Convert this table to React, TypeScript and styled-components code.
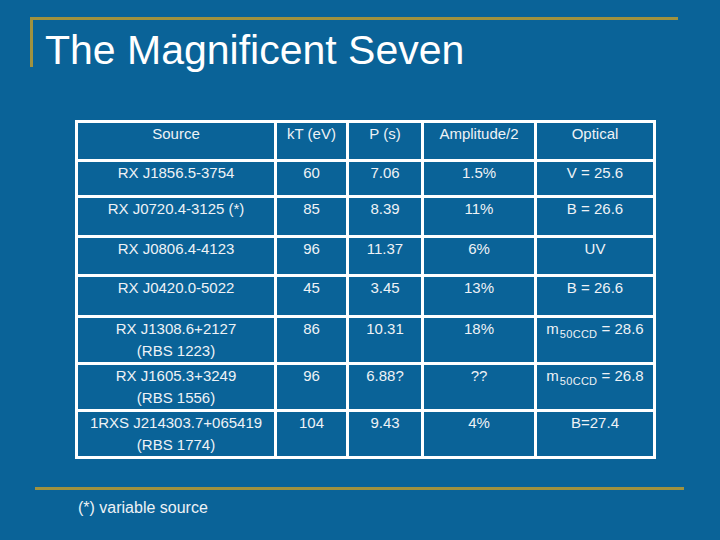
import styled, { createGlobalStyle } from 'styled-components'

const GlobalStyle = createGlobalStyle`
  html, body {
    margin: 0;
    padding: 0;
    background: #0a6398;
  }
`

const rows = [
  { source: ['RX J1856.5-3754'], kt: '60', p: '7.06', amp: '1.5%', opt: 'V = 25.6', h: 36 },
  { source: ['RX J0720.4-3125 (*)'], kt: '85', p: '8.39', amp: '11%', opt: 'B = 26.6', h: 40 },
  { source: ['RX J0806.4-4123'], kt: '96', p: '11.37', amp: '6%', opt: 'UV', h: 39 },
  { source: ['RX J0420.0-5022'], kt: '45', p: '3.45', amp: '13%', opt: 'B = 26.6', h: 41 },
  { source: ['RX J1308.6+2127', '(RBS 1223)'], kt: '86', p: '10.31', amp: '18%', opt: 'm|28.6', h: 47 },
  { source: ['RX J1605.3+3249', '(RBS 1556)'], kt: '96', p: '6.88?', amp: '??', opt: 'm|26.8', h: 46 },
  { source: ['1RXS J214303.7+065419', '(RBS 1774)'], kt: '104', p: '9.43', amp: '4%', opt: 'B=27.4', h: 46 },
]

const colWidths = [199, 72, 75, 113, 119]

// "m|x" marks a m_50CCD magnitude
const Optical = ({ value }: { value: string }) => {
  if (!value.startsWith('m|')) return <>{value}</>
  return (
    <>
      m<Sub>50CCD</Sub> = {value.slice(2)}
    </>
  )
}

const App = () => {
  return (
    <Page>
      <GlobalStyle />
      <Header>
        <Title>The Magnificent Seven</Title>
      </Header>
      <Table>
        <colgroup>
          {colWidths.map((w, i) => (
            <col key={i} style={{ width: w }} />
          ))}
        </colgroup>
        <tbody>
          <Row $h={39}>
            <Cell>Source</Cell>
            <Cell>kT (eV)</Cell>
            <Cell>P (s)</Cell>
            <Cell>Amplitude/2</Cell>
            <Cell>Optical</Cell>
          </Row>
          {rows.map((r) => (
            <Row key={r.source[0]} $h={r.h}>
              <Cell>
                {r.source.map((s, i) => (
                  <div key={i}>{s}</div>
                ))}
              </Cell>
              <Cell>{r.kt}</Cell>
              <Cell>{r.p}</Cell>
              <Cell>{r.amp}</Cell>
              <Cell>
                <Optical value={r.opt} />
              </Cell>
            </Row>
          ))}
        </tbody>
      </Table>
      <Footnote>(*) variable source</Footnote>
    </Page>
  )
}

export default App

const Page = styled.div`
  width: 720px;
  height: 540px;
  background: #0a6398;
  overflow: hidden;
  display: flex;
  flex-direction: column;
  align-items: flex-start;
  font-family: 'Liberation Sans', Arial, sans-serif;
  color: #eef2f6;
`

const Header = styled.div`
  box-sizing: border-box;
  margin: 17px 0 0 30px;
  width: 648px;
  height: 50px;
  border-top: 3px solid #a0923f;
  border-left: 3px solid #a0923f;
`

const Title = styled.h1`
  margin: 0;
  padding: 7px 0 0 12px;
  font-size: 41px;
  line-height: 47px;
  font-weight: 400;
  color: #ffffff;
  white-space: nowrap;
`

const Table = styled.table`
  margin: 53px 0 0 75px;
  border-collapse: separate;
  border-spacing: 0;
  table-layout: fixed;
  width: 581px;
  border-top: 3px solid #ffffff;
  border-left: 3px solid #ffffff;
`

const Row = styled.tr<{ $h: number }>`
  height: ${(p) => p.$h}px;
`

const Cell = styled.td`
  box-sizing: border-box;
  padding: 0;
  border-right: 3px solid #ffffff;
  border-bottom: 3px solid #ffffff;
  vertical-align: top;
  text-align: center;
  font-size: 15px;
  line-height: 22px;
  white-space: nowrap;
`

const Sub = styled.span`
  font-size: 11px;
  letter-spacing: 0.3px;
  position: relative;
  top: 4px;
  margin-left: 1px;
`

const Footnote = styled.div`
  box-sizing: border-box;
  margin: 28px 0 0 35px;
  width: 649px;
  border-top: 3px solid #a0923f;
  padding: 8px 0 0 43px;
  font-size: 16px;
  line-height: 20px;
`
